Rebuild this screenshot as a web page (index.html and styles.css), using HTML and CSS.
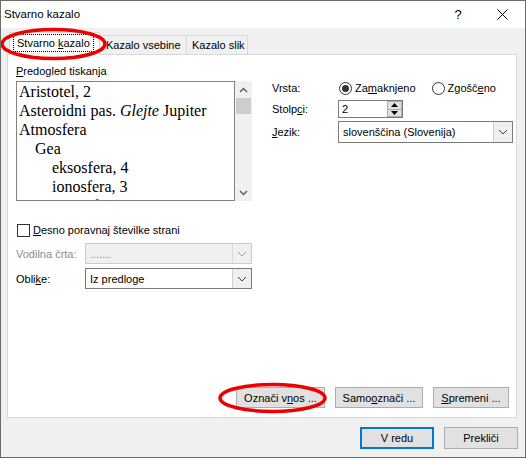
FILE: index.html
```html
<!DOCTYPE html>
<html lang="sl">
<head>
<meta charset="utf-8">
<title>Stvarno kazalo</title>
<link rel="stylesheet" href="styles.css">
</head>
<body>
<div class="window">
  <div class="titlebar">
    <span class="title">Stvarno kazalo</span>
    <span class="tb-btn help">?</span>
    <span class="tb-btn close"><svg width="11" height="11" viewBox="0 0 11 11"><path d="M0.5 0.5 L10.5 10.5 M10.5 0.5 L0.5 10.5" stroke="#000" stroke-width="1" fill="none"/></svg></span>
  </div>
  <div class="client">
    <div class="tabs">
      <div class="tab active"><span class="focus">Stvarno <u>k</u>azalo</span></div>
      <div class="tab t2">Kazalo vsebine</div>
      <div class="tab t3">Kazalo slik</div>
    </div>
    <div class="panel">
      <div class="top">
        <div class="left">
          <div class="label"><u>P</u>redogled tiskanja</div>
          <div class="preview-wrap">
            <div class="preview">
              <div class="l0">Aristotel, 2</div>
              <div class="l0">Asteroidni pas. <i>Glejte</i> Jupiter</div>
              <div class="l0">Atmosfera</div>
              <div class="l1">Gea</div>
              <div class="l2">eksosfera, 4</div>
              <div class="l2">ionosfera, 3</div>
              <div class="l2">mezosfera, 3-4</div>
            </div>
            <div class="vscroll">
              <div class="sb-btn"><svg width="9" height="6" viewBox="0 0 9 6"><path d="M1 5 L4.5 1.5 L8 5" stroke="#606060" stroke-width="1.5" fill="none"/></svg></div>
              <div class="thumb"></div>
              <div class="track"></div>
              <div class="sb-btn"><svg width="9" height="6" viewBox="0 0 9 6"><path d="M1 1 L4.5 4.5 L8 1" stroke="#606060" stroke-width="1.5" fill="none"/></svg></div>
            </div>
          </div>
          <div class="check"><span class="cbox"></span><span><u>D</u>esno poravnaj številke strani</span></div>
          <div class="field disabled">
            <span class="flabel">Vodilna črta:</span>
            <div class="combo"><span class="cval">.......</span><span class="drop"><svg width="10" height="6" viewBox="0 0 10 6"><path d="M1 1 L5 5 L9 1" stroke="#a0a0a0" stroke-width="1" fill="none"/></svg></span></div>
          </div>
          <div class="field f2">
            <span class="flabel">Obli<u>k</u>e:</span>
            <div class="combo"><span class="cval">Iz predloge</span><span class="drop"><svg width="10" height="6" viewBox="0 0 10 6"><path d="M1 1 L5 5 L9 1" stroke="#404040" stroke-width="1" fill="none"/></svg></span></div>
          </div>
        </div>
        <div class="right">
          <div class="row r1">
            <span class="rlabel">Vrsta:</span>
            <span class="radio checked"></span><span class="rtext">Za<u>m</u>aknjeno</span>
            <span class="radio r-second"></span><span class="rtext">Zgošč<u>e</u>no</span>
          </div>
          <div class="row r2">
            <span class="rlabel">Stolp<u>c</u>i:</span>
            <div class="spin"><span class="sval">2</span><span class="spin-btns"><span class="sbtn"><svg width="7" height="4" viewBox="0 0 7 4"><path d="M0 4 L3.5 0 L7 4 Z" fill="#000"/></svg></span><span class="sbtn"><svg width="7" height="4" viewBox="0 0 7 4"><path d="M0 0 L3.5 4 L7 0 Z" fill="#000"/></svg></span></span></div>
          </div>
          <div class="row r3">
            <span class="rlabel"><u>J</u>ezik:</span>
            <div class="combo wide"><span class="cval">slovenščina (Slovenija)</span><span class="drop"><svg width="10" height="6" viewBox="0 0 10 6"><path d="M1 1 L5 5 L9 1" stroke="#404040" stroke-width="1" fill="none"/></svg></span></div>
          </div>
        </div>
      </div>
      <div class="actions">
        <button class="btn b1">Označi v<u>n</u>os ...</button>
        <button class="btn b2">Samo<u>o</u>znači ...</button>
        <button class="btn b3"><u>S</u>premeni ...</button>
      </div>
    </div>
    <div class="dialog-buttons">
      <button class="btn default">V redu</button>
      <button class="btn">Prekliči</button>
    </div>
  </div>
  <svg class="marks" width="526" height="458" viewBox="0 0 526 458">
    <ellipse cx="53.5" cy="44" rx="51.5" ry="14.5" fill="none" stroke="#ee0000" stroke-width="3.5"/>
    <ellipse cx="272.5" cy="398" rx="52.5" ry="13.5" fill="none" stroke="#ee0000" stroke-width="3.5"/>
  </svg>
</div>
</body>
</html>
```

FILE: styles.css
```css
* { box-sizing: border-box; }

body {
  margin: 0;
  font-family: "Liberation Sans", Arial, sans-serif;
  font-size: 11px;
  color: #000;
  background: #fff;
}

u { text-decoration: underline; text-underline-offset: 1px; }

.window {
  position: relative;
  width: 526px;
  height: 458px;
  border: 1px solid #6b6b6b;
  background: #f0f0f0;
  display: flex;
  flex-direction: column;
  overflow: hidden;
}

.titlebar {
  height: 27px;
  flex: none;
  background: #fff;
  display: flex;
  align-items: center;
  padding-left: 3px;
}

.title { flex: 1; font-size: 11.5px; padding-bottom: 1px; }

.tb-btn {
  width: 46px;
  height: 27px;
  display: flex;
  align-items: center;
  justify-content: center;
}

.help { font-size: 13px; padding-left: 4px; }
.close { padding-bottom: 1px; }

.client {
  flex: 1;
  display: flex;
  flex-direction: column;
}

.tabs {
  height: 26px;
  flex: none;
  display: flex;
  align-items: flex-end;
  padding-left: 8px;
}

.tab {
  height: 19px;
  border: 1px solid #d9d9d9;
  border-bottom: none;
  background: #f0f0f0;
  display: flex;
  align-items: center;
  color: #000;
}

.tab.active {
  height: 23px;
  width: 91px;
  background: #fff;
  margin-bottom: -1px;
  position: relative;
  z-index: 1;
  padding-left: 3px;
  padding-bottom: 2px;
}

.focus {
  border: 1px dotted #000;
  padding: 2px 3px 2px 3px;
  line-height: 12px;
}

.t2 { width: 88px; margin-left: -1px; padding-left: 6px; }
.t3 { width: 62px; margin-left: -1px; padding-left: 5px; }

.panel {
  margin-left: 6px;
  width: 510px;
  height: 364px;
  flex: none;
  background: #fff;
  border: 1px solid #d9d9d9;
  display: flex;
  flex-direction: column;
}

.top {
  display: flex;
  padding: 10px 0 0 8px;
}

.left { width: 236px; display: flex; flex-direction: column; }

.label { line-height: 13px; height: 13px; }

.preview-wrap {
  margin-top: 3px;
  height: 120px;
  display: flex;
}

.preview {
  width: 220px;
  height: 120px;
  border: 1px solid #828282;
  overflow: hidden;
  font-family: "Liberation Serif", "Times New Roman", serif;
  font-size: 16px;
  line-height: 19px;
  padding-left: 2px;
  white-space: nowrap;
}

.l1 { padding-left: 16px; }
.l2 { padding-left: 33px; }

.vscroll {
  width: 17px;
  height: 120px;
  background: #f0f0f0;
  display: flex;
  flex-direction: column;
}

.sb-btn {
  height: 17px;
  display: flex;
  align-items: center;
  justify-content: center;
}

.thumb { height: 16px; margin: 0 1px; background: #cdcdcd; }
.track { flex: 1; }

.check {
  margin-top: 23px;
  height: 13px;
  display: flex;
  align-items: center;
  gap: 3px;
  line-height: 13px;
}

.cbox {
  width: 13px;
  height: 13px;
  margin-left: 1px;
  border: 1px solid #333;
  background: #fff;
  flex: none;
}

.field {
  display: flex;
  align-items: center;
  height: 21px;
  margin-top: 6px;
}

.field.f2 { margin-top: 4px; }

.flabel { width: 69px; flex: none; }

.disabled .flabel { color: #8d8d8d; }

.combo {
  flex: 1;
  height: 21px;
  border: 1px solid #7a7a7a;
  background: #fff;
  display: flex;
  align-items: center;
}

.disabled .combo {
  border-color: #cccccc;
  background: #f0f0f0;
  color: #8d8d8d;
}

.cval { flex: 1; padding-left: 4px; }

.drop {
  width: 19px;
  height: 100%;
  border-left: 1px solid #cfcfcf;
  background: #f0f0f0;
  display: flex;
  align-items: center;
  justify-content: center;
}

.disabled .drop { border-left-color: #d9d9d9; }

.right {
  margin-left: 20px;
  padding-top: 15px;
  flex: 1;
  display: flex;
  flex-direction: column;
  padding-right: 2px;
}

.row { display: flex; align-items: center; }
.r1 { height: 16px; }
.r2 { height: 18px; margin-top: 4px; }
.r3 { height: 22px; margin-top: 3px; }

.rlabel { width: 66px; flex: none; }

.radio {
  width: 13px;
  height: 13px;
  border: 1px solid #333;
  border-radius: 50%;
  margin-left: 1px;
  background: #fff;
  flex: none;
  display: flex;
  align-items: center;
  justify-content: center;
}

.radio.checked::after {
  content: "";
  width: 7px;
  height: 7px;
  border-radius: 50%;
  background: #333;
}

.rtext { margin-left: 3px; }
.r-second { margin-left: 16px; }

.spin {
  width: 65px;
  height: 18px;
  border: 1px solid #7a7a7a;
  background: #fff;
  display: flex;
}

.sval { flex: 1; padding-left: 3px; line-height: 16px; }

.spin-btns {
  width: 15px;
  display: flex;
  flex-direction: column;
}

.sbtn {
  flex: 1;
  background: #e1e1e1;
  border: 1px solid #adadad;
  display: flex;
  align-items: center;
  justify-content: center;
}

.sbtn + .sbtn { border-top: none; }

.combo.wide { flex: none; width: 175px; height: 22px; }

.actions {
  margin-top: auto;
  display: flex;
  justify-content: flex-end;
  gap: 10px;
  padding: 0 7px 9px 0;
}

.btn {
  font-family: "Liberation Sans", Arial, sans-serif;
  font-size: 11px;
  color: #000;
  height: 21px;
  background: #e1e1e1;
  border: 1px solid #adadad;
  padding: 0;
  margin: 0;
}

.b1 { width: 89px; }
.b2 { width: 88px; }
.b3 { width: 76px; }

.dialog-buttons {
  margin-top: 9px;
  display: flex;
  justify-content: flex-end;
  gap: 10px;
  padding-right: 7px;
}

.dialog-buttons .btn { width: 74px; height: 22px; }

.btn.default { border: 2px solid #0078d7; }

.marks {
  position: absolute;
  left: -1px;
  top: -1px;
  pointer-events: none;
  z-index: 5;
}
```
